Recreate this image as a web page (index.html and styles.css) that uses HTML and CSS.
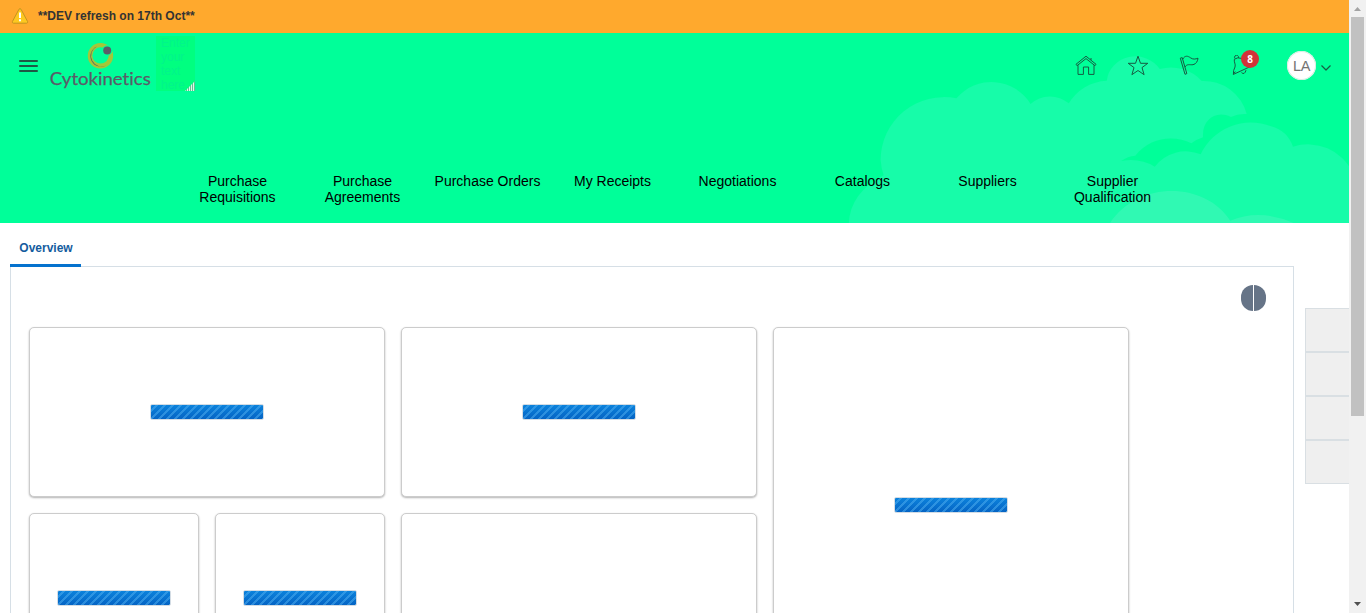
FILE: index.html
```html
<!DOCTYPE html>
<html lang="en">
<head>
<meta charset="utf-8">
<title>Procurement</title>
<link rel="stylesheet" href="styles.css">
</head>
<body>
<div class="page">
  <div class="notice">
    <svg class="warn" width="18" height="16" viewBox="0 0 18 16"><path d="M8 1.2Q9 0 10 1.2L16.6 13.6Q17 15 15.6 15.2H2.4Q1 15 1.4 13.6Z" fill="#fdc820" stroke="#c49320"/><path d="M8 4.5h2v5.5H8zM8 11.3h2v2H8z" fill="#fff"/></svg>
    <span>**DEV refresh on 17th Oct**</span>
  </div>
  <header class="hero">
    <svg class="clouds" width="509" height="190" viewBox="0 0 1517 570" preserveAspectRatio="none">
      <path class="cloud" d="M26 570Q28 475 130 421A192 192 0 0 1 121 375A189 189 0 0 1 347 190A136 136 0 0 1 568 207A86 86 0 0 1 682 205A138 138 0 0 1 795 137A86 82 0 0 1 953 102A124 124 0 0 1 1078 138A132 132 0 0 1 1212 237Q1187 235 1165 246C1120 224 1078 255 1082 307Q1063 313 1047 325C1000 300 925 303 880 362Q858 363 838 378Q894 368 938 395A116 116 0 0 1 1075 358A165 165 0 0 1 1285 274A96 96 0 0 1 1350 335A146 146 0 0 1 1527 412V570Z"/>
      <path class="cloud-light" d="M801 570C882 437 1085 436 1163 557Q1257 518 1365 570Z"/>
    </svg>
    <div class="topbar">
      <div class="menu"><i></i><i></i><i></i></div>
      <svg class="logo" width="102" height="50" viewBox="0 0 102 50">
        <path fill-rule="evenodd" fill="#a4c739" d="M50.5 5A12.7 12.7 0 1 1 50.4 30.4A12.7 12.7 0 1 1 50.5 5ZM50.5 9.2A8.2 8.2 0 1 0 50.6 25.6A8.2 8.2 0 1 0 50.5 9.2Z"/>
        <path d="M46.8 8.4A10.6 10.6 0 1 0 56.5 27.2A9.6 9.6 0 0 1 46.8 8.4Z" fill="#5b5b68"/>
        <circle cx="57.2" cy="12.4" r="5.2" fill="#00ff99"/>
        <circle cx="57.2" cy="12.4" r="4" fill="#5b5b68"/>
        <text x="-.3" y="47" textLength="101" lengthAdjust="spacingAndGlyphs" class="logo-text">Cytokinetics</text>
      </svg>
      <div class="note">Enter<br>your<br>text<br>here..<span class="grip"></span></div>
      <nav class="tools">
        <svg width="22" height="22" viewBox="0 0 22 22"><path d="M1 9.3 11 1.2 21 9.3 20 10.7 11 3.6 2 10.7ZM3 10.2V19.4H8.4V12H13.6V19.4H19V10.2M16 3V5"/></svg>
        <svg width="22" height="22" viewBox="0 0 22 22"><path d="M11 1.2 13.5 8.3H20.8L15 12.6 17.1 19.7 11 15.5 4.9 19.7 7 12.6 1.2 8.3H8.5Z"/></svg>
        <svg width="22" height="22" viewBox="0 0 22 22"><path d="M1.3 3.2 3.2 2.6 7.8 18.6 6 19.3ZM3.7 4.2C6 0 9 1 11.3 2.7C14 4.7 16.5 4.2 19 3.2C18.8 6 17 9.2 14 9.7C11 10.1 8 8.5 6 12"/></svg>
        <span class="bell">
          <svg width="22" height="22" viewBox="0 0 22 22"><path d="M4 3.5A2 2 0 1 1 7.4 3M3.4 4.2Q6.5 1.8 11 3.5M3.4 4.2C2.6 7 5 9 4 12Q2 15.5 2.4 19.4L19.5 11.5M2.4 19.4Q2.6 17.4 4.5 16.8M10.5 17.6Q13.5 20.3 15 15.2"/></svg>
          <b class="badge">8</b>
        </span>
        <span class="avatar">LA</span>
        <svg class="chev" width="12" height="8" viewBox="0 0 12 8"><path d="M1.5 1.5 6 6 10.5 1.5"/></svg>
      </nav>
    </div>
    <nav class="links">
      <a>Purchase Requisitions</a><a>Purchase Agreements</a><a>Purchase Orders</a><a>My Receipts</a><a>Negotiations</a><a>Catalogs</a><a>Suppliers</a><a>Supplier Qualification</a>
    </nav>
  </header>
  <main class="content">
    <div class="main-col">
      <div class="tab">Overview</div>
      <section class="panel">
        <div class="switch"><i></i><i></i></div>
        <div class="grid">
          <div class="card wide"><span class="bar"></span></div>
          <div class="card wide"><span class="bar"></span></div>
          <div class="card wide tall"><span class="bar"></span></div>
          <div class="card"><span class="bar"></span></div>
          <div class="card"><span class="bar"></span></div>
          <div class="card wide tall"></div>
        </div>
      </section>
    </div>
    <aside class="side"><i></i><i></i><i></i><i></i></aside>
  </main>
</div>
<div class="scroll">
  <svg class="up" width="7" height="4" viewBox="0 0 7 4"><path d="M3.5 0 7 4H0Z" fill="#a3a3a3"/></svg>
  <div class="thumb"></div>
  <svg class="down" width="7" height="4" viewBox="0 0 7 4"><path d="M0 0H7L3.5 4Z" fill="#505050"/></svg>
</div>
</body>
</html>
```
FILE: styles.css
```css
* { box-sizing: border-box; }
body { margin: 0; display: flex; width: 1366px; height: 613px; overflow: hidden; background: #fff; font-family: "Liberation Sans", Arial, sans-serif; }
.page { width: 1349px; height: 613px; overflow: hidden; }
.notice { display: flex; height: 33px; padding: 7px 0 0 11px; background: #ffa92d; color: #333; font-size: 12px; font-weight: bold; line-height: 18px; }
.notice span { margin-left: 9px; }
.warn { margin-top: 1px; }
.hero { position: relative; height: 190px; background: #00ff99; }
.clouds { position: absolute; right: 0; top: 2px; width: 509px; height: 190px; overflow: hidden; clip-path: inset(0 0 2px 0); }
.cloud { fill: #17fca9; }
.cloud-light { fill: #30f9b3; }
.topbar { position: relative; display: flex; height: 64px; padding-left: 19px; }
.menu { display: flex; flex-direction: column; gap: 3px; width: 19px; padding-top: 27px; }
.menu i { height: 2px; background: #1e5945; border-radius: 1px; }
.logo { margin: 5px 0 0 12px; overflow: visible; }
.logo-text { font: 18px Lato, sans-serif; font-variant-ligatures: none; fill: #5b5b68; stroke: #5b5b68; stroke-width: .25px; }
.note { position: relative; width: 39px; height: 55px; margin: 3px 0 0 4px; padding: 0 0 0 5px; background: #00ff80; color: #00f48c; font-size: 12px; line-height: 14px; overflow: hidden; }
.grip { position: absolute; right: 0; bottom: 0; width: 10px; height: 10px; clip-path: polygon(100% 0, 100% 100%, 0 100%); background: repeating-linear-gradient(90deg, #ddfbe9 0 1px, #68bd93 1px 2px); }
.tools { display: flex; margin-left: auto; padding: 22px 17px 0 0; }
.tools svg { fill: none; stroke: #165c42; stroke-width: 1; stroke-linejoin: round; }
.tools > svg + svg { margin-left: 30px; }
.bell { position: relative; width: 30px; margin-left: 30px; }
.badge { position: absolute; left: 10px; top: -5px; width: 18px; height: 18px; border-radius: 50%; background: #d13438; color: #fff; font: bold 10px/18px "Open Sans", sans-serif; text-align: center; }
.avatar { width: 29px; height: 29px; margin: -4px 0 0 26px; border-radius: 50%; background: #fff; box-shadow: inset 0 0 0 1px #d5eee3; color: #737373; font-size: 14.5px; line-height: 30px; letter-spacing: -.3px; text-align: center; }
.tools > .avatar + .chev { margin: 9px 0 0 4px; stroke-width: 1.2; }
.links { position: relative; display: grid; grid-template-columns: repeat(8, 125px); justify-content: center; padding: 76px 0 0 1px; color: #000; font-size: 14px; line-height: 16px; text-align: center; }
.links a { padding: 0 8px; }
.content { display: flex; padding-left: 10px; height: 800px; }
.main-col { width: 1284px; }
.tab { width: 71px; height: 44px; padding-left: 1px; border-bottom: 3px solid #0572ce; position: relative; color: #145c9e; font-size: 12px; font-weight: bold; line-height: 50px; text-align: center; }
.panel { height: 700px; margin-top: -1px; border: 1px solid #d6dfe6; padding: 18px; }
.switch { display: flex; gap: 1px; width: 25px; height: 26px; margin: 0 9px 0 auto; border-radius: 12px; overflow: hidden; }
.switch i { width: 12px; background: #667487; }
.grid { display: grid; grid-template-columns: repeat(6, 170px); grid-auto-rows: 170px; gap: 16px; margin-top: 16px; }
.card { display: flex; align-items: center; justify-content: center; border: 1px solid #ccc; border-radius: 5px; background: #fff; box-shadow: 0 1px 2px rgba(0,0,0,.3); }
.wide { grid-column: span 2; }
.tall { grid-row: span 2; }
.bar { width: 114px; height: 16px; border: 1px solid #d3dce4; border-radius: 2px; background: repeating-linear-gradient(135deg, transparent 0 3px, rgba(80,175,240,.5) 3px 5px, transparent 5px 5.66px), linear-gradient(#0b82dc, #0564c4); }
.side { width: 44px; margin: 85px 0 0 11px; }
.side i { display: block; height: 44px; border: 1px solid #d9dfe3; border-right: 0; background: #efefef; }
.scroll { display: flex; flex-direction: column; width: 17px; height: 613px; background: #f1f1f1; align-items: center; }
.up { margin: 7px 0 6px; }
.thumb { width: 13px; height: 399px; background: #c1c1c1; }
.down { margin: auto 0 7px; }
```
